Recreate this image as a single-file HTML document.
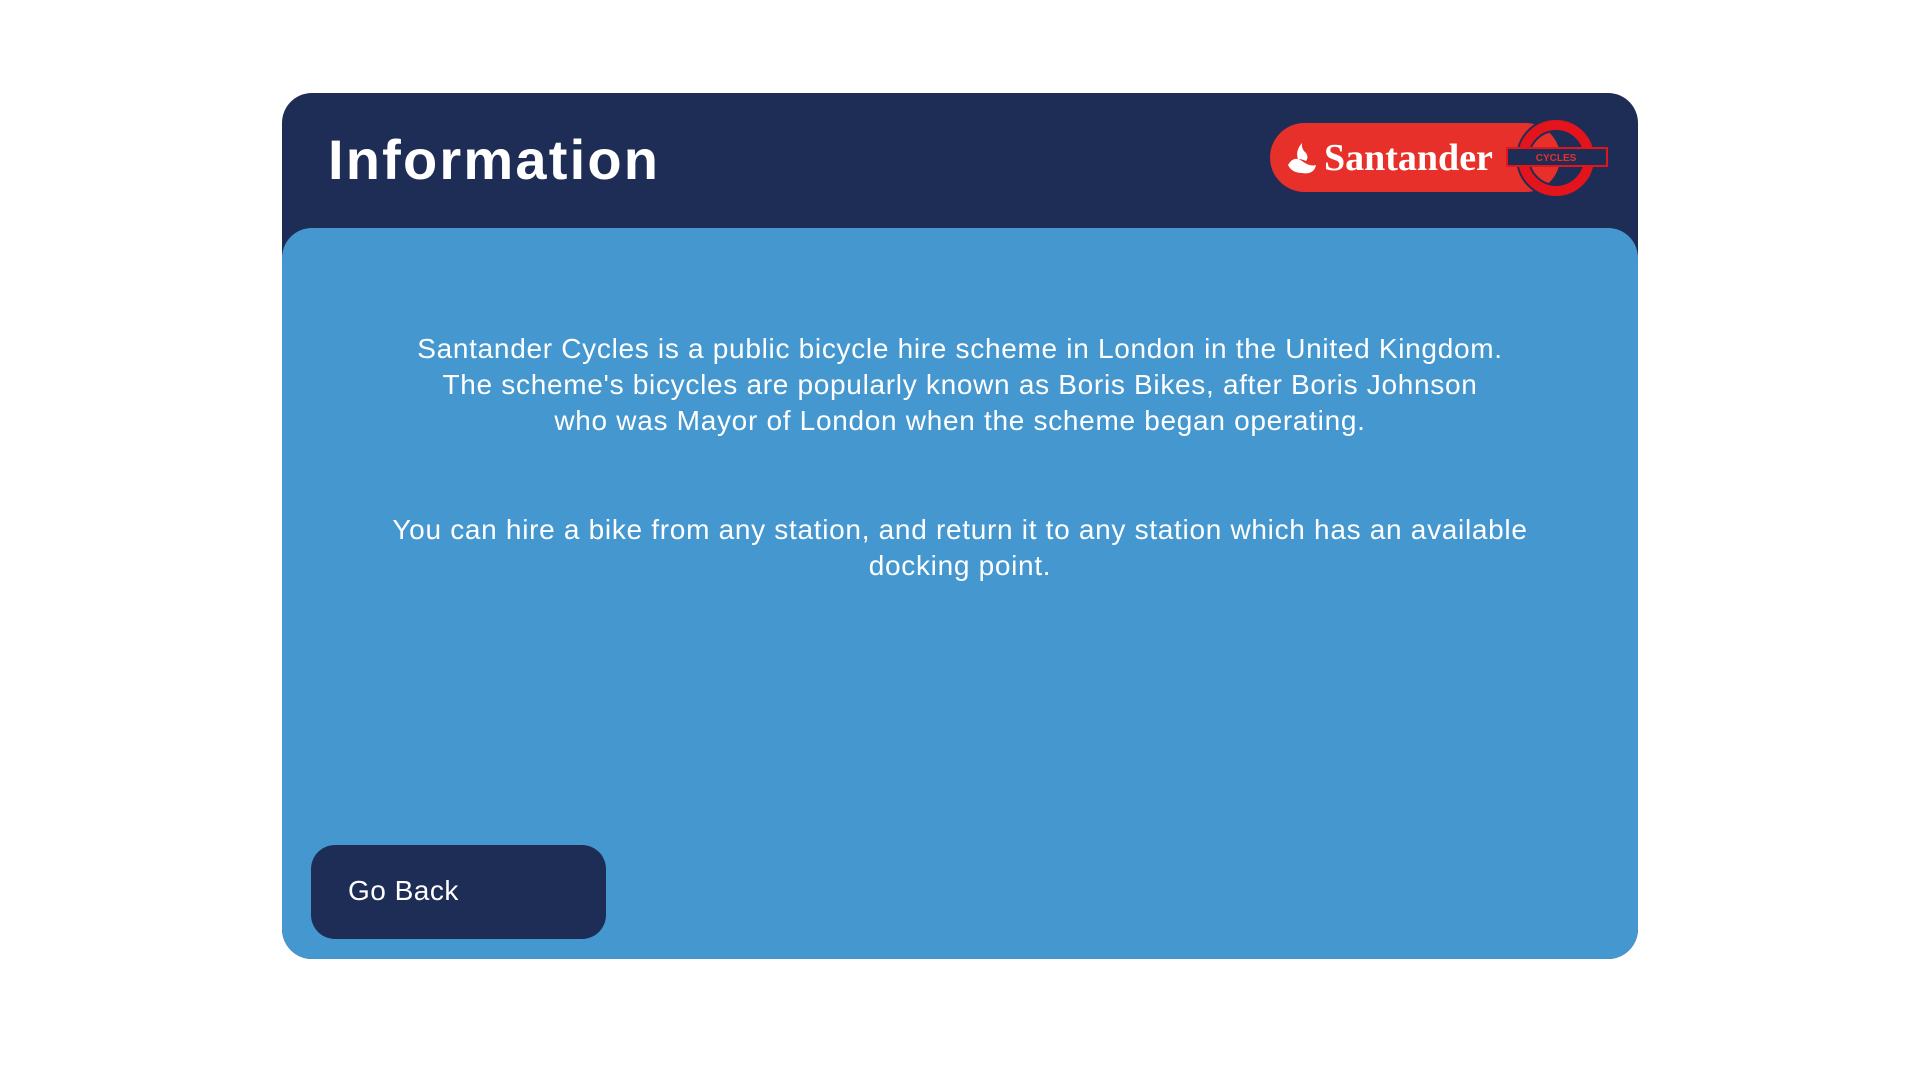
<!DOCTYPE html>
<html><head><meta charset="utf-8"><style>
html,body{margin:0;padding:0;background:#fff;width:1920px;height:1080px;overflow:hidden;font-family:"Liberation Sans",sans-serif}
.card{position:absolute;left:282px;top:93px;width:1356px;height:866px;border-radius:30px;background:#1e2d56;overflow:hidden}
.title{position:absolute;left:46px;top:34px;font-size:56px;font-weight:bold;color:#fff;letter-spacing:2.2px}
.body{position:absolute;left:0;top:135px;width:1356px;height:731px;background:#4597d0;border-radius:30px 30px 30px 30px}
.p{position:absolute;left:0;width:1356px;text-align:center;color:#fff;font-size:28px;line-height:36px;letter-spacing:0.7px}
.btn{position:absolute;left:29px;top:617px;width:295px;height:94px;border-radius:24px;background:#1e2d56;color:#fff;font-size:28px}
.btn span{position:absolute;left:37px;top:30px;letter-spacing:0.5px}
</style></head><body>
<div class="card">
<div class="title">Information</div>
<svg style="position:absolute;left:980px;top:22px" width="370" height="85" viewBox="0 0 370 85">
<rect x="8" y="8" width="290" height="69" rx="34.5" fill="#e8302a"/>
<path d="M26 50 q6-10 14-4 q8 6 14 4 q-2 10-14 8 q-10 0-14-8z M36 44 q-3-8 4-16 q-1 6 4 10 q3 4 0 8 q-4-2-8-2z" fill="#fff"/>
<text x="62" y="55" font-family="Liberation Serif,serif" font-size="38" font-weight="bold" fill="#fff">Santander</text>
<circle cx="294" cy="43" r="33" fill="none" stroke="#1e2d56" stroke-width="14"/>
<circle cx="294" cy="43" r="33" fill="none" stroke="#e3141c" stroke-width="10"/>
<rect x="245" y="33" width="100" height="18" fill="#1e2d56" stroke="#e3141c" stroke-width="2"/>
<text x="294" y="46" text-anchor="middle" font-size="10" fill="#e8302a" font-weight="bold">CYCLES</text>
</svg>
<div class="body">
<div class="p" style="top:103px">Santander Cycles is a public bicycle hire scheme in London in the United Kingdom.<br>The scheme's bicycles are popularly known as Boris Bikes, after Boris Johnson<br>who was Mayor of London when the scheme began operating.</div>
<div class="p" style="top:284px">You can hire a bike from any station, and return it to any station which has an available<br>docking point.</div>
<div class="btn"><span>Go Back</span></div>
</div>
</div>
</body></html>
